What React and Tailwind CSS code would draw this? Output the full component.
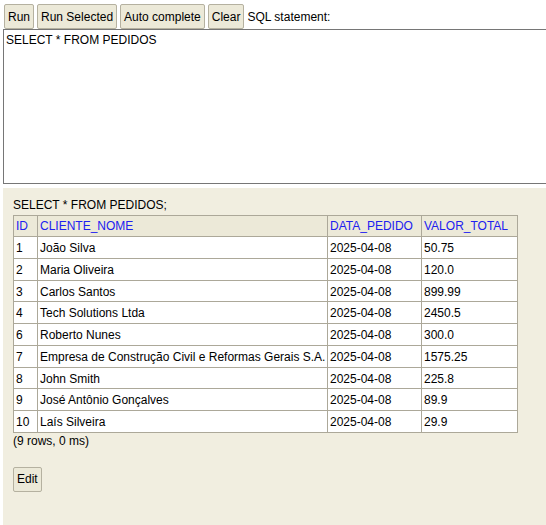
import React from "react";

const rows = [
  ["1", "João Silva", "2025-04-08", "50.75"],
  ["2", "Maria Oliveira", "2025-04-08", "120.0"],
  ["3", "Carlos Santos", "2025-04-08", "899.99"],
  ["4", "Tech Solutions Ltda", "2025-04-08", "2450.5"],
  ["6", "Roberto Nunes", "2025-04-08", "300.0"],
  ["7", "Empresa de Construção Civil e Reformas Gerais S.A.", "2025-04-08", "1575.25"],
  ["8", "John Smith", "2025-04-08", "225.8"],
  ["9", "José Antônio Gonçalves", "2025-04-08", "89.9"],
  ["10", "Laís Silveira", "2025-04-08", "29.9"],
];

const btn =
  "h-[25px] px-[3px] border border-[#b5b1a0] rounded-[2px] bg-[#ece9d8] text-[12px] leading-[14px] text-black";

const App = () => {
  return (
    <div
      className="w-[546px] h-[525px] overflow-hidden bg-white text-[12px] text-black flex flex-col"
      style={{ fontFamily: '"Liberation Sans", Arial, sans-serif' }}
    >
      <div className="flex items-center gap-[3px] pl-[4px] pt-[4px]">
        <button className={btn}>Run</button>
        <button className={btn}>Run Selected</button>
        <button className={btn}>Auto complete</button>
        <button className={btn}>Clear</button>
        <span className="leading-[14px]">SQL statement:</span>
      </div>
      <div className="ml-[3px] w-[560px] h-[155px] border border-[#767676] px-[2px] py-[3px] leading-[14px]">
        SELECT * FROM PEDIDOS
      </div>
      <div className="mt-[4px] ml-[3px] w-[560px] flex-1 bg-[#f1eee0] pl-[10px] pt-[10px]">
        <div className="leading-[14px] mb-[3px]">SELECT * FROM PEDIDOS;</div>
        <table className="border-collapse table-fixed w-[504px] bg-white">
          <colgroup>
            <col className="w-[24px]" />
            <col className="w-[290px]" />
            <col className="w-[94px]" />
            <col className="w-[96px]" />
          </colgroup>
          <thead>
            <tr>
              {["ID", "CLIENTE_NOME", "DATA_PEDIDO", "VALOR_TOTAL"].map((h) => (
                <th
                  key={h}
                  className="border border-[#aca899] bg-[#ece9d8] text-[#2020f0] font-normal text-left px-[2px] py-[3px] leading-[14px] whitespace-nowrap"
                >
                  {h}
                </th>
              ))}
            </tr>
          </thead>
          <tbody>
            {rows.map((r) => (
              <tr key={r[0]}>
                {r.map((c, i) => (
                  <td
                    key={i}
                    className="border border-[#aca899] px-[2px] pt-[4px] pb-[1px] leading-[15.75px] whitespace-nowrap"
                  >
                    {c}
                  </td>
                ))}
              </tr>
            ))}
          </tbody>
        </table>
        <div className="leading-[14px] mt-[1px]">(9 rows, 0 ms)</div>
        <button className={btn + " mt-[19px]"}>Edit</button>
      </div>
    </div>
  );
};

export default App;
